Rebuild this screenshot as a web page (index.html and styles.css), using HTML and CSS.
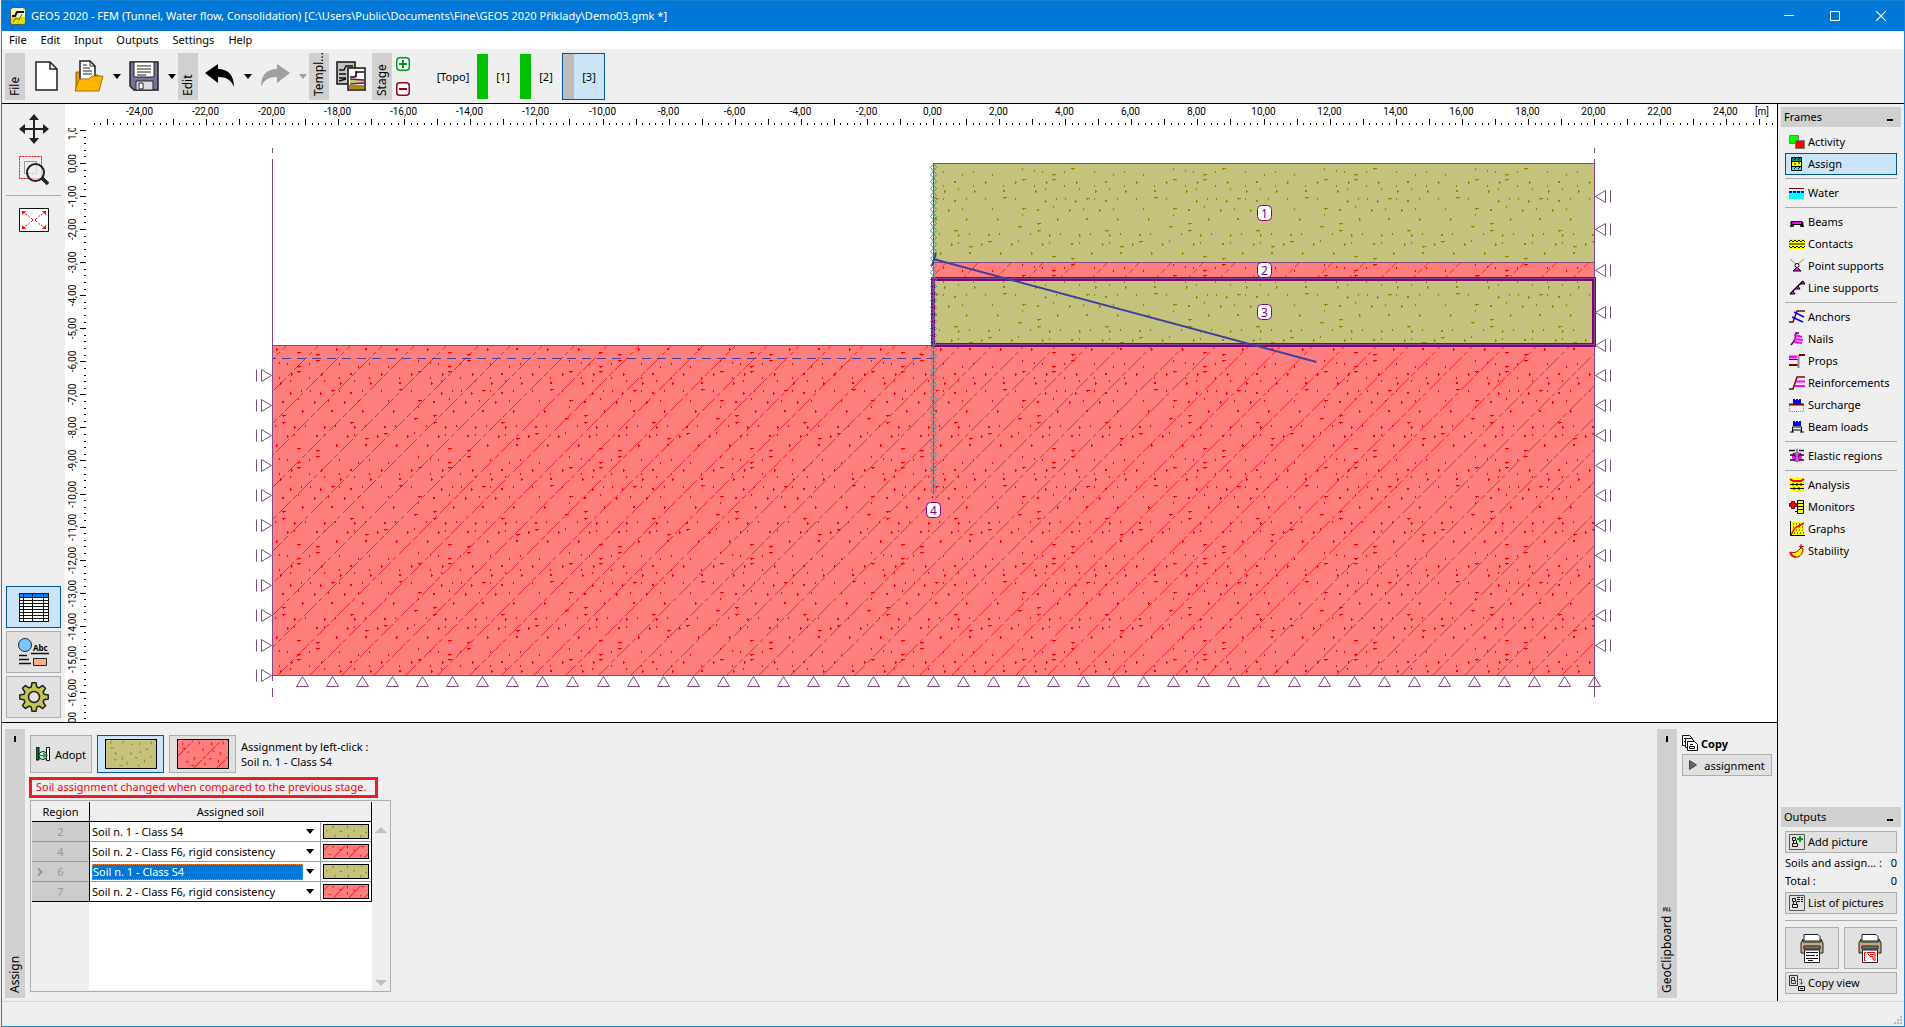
FILE: index.html
```html
<!DOCTYPE html>
<html lang="en">
<head>
<meta charset="utf-8">
<title>GEO5 2020 - FEM</title>
<link rel="stylesheet" href="styles.css">
</head>
<body>
<svg class="defs" aria-hidden="true">
  <defs>
    <pattern id="grains-red" width="151" height="96" patternUnits="userSpaceOnUse" patternTransform="translate(57 90)"><g class="grains red"></g></pattern>
    <pattern id="grains-olive" width="151" height="96" patternUnits="userSpaceOnUse" patternTransform="translate(57 90)"><g class="grains olive"></g></pattern>
    <pattern id="wall" x="0" y="60" width="7" height="7" patternUnits="userSpaceOnUse"><path d="M3.500 0L6.500 3.500L3.500 7L.5 3.500Z" fill="none" stroke="#4d8a8a"/></pattern>
  </defs>
  <symbol id="sw-olive" viewBox="0 0 52 30" preserveAspectRatio="xMidYMid slice"><rect width="52" height="30" fill="#c4c27c"/><path d="M5 2v3M18 1v3M35 3v3M47 2v3M5 9h3M10 13v3M26 5h2M26 13v3M36 12v2M41 10h3M8 21h3M17 18v3M22 23v3M30 19h3M40 21v3M46 18h2M14 27h3M34 26v2" stroke="#8c8c00" fill="none"/></symbol>
  <symbol id="sw-red" viewBox="0 0 52 30" preserveAspectRatio="xMidYMid slice"><rect width="52" height="30" fill="#ff7f7f"/><path d="M0 17L16 1M16 30L45 1M40 30L52 18" stroke="#f00" stroke-dasharray="12 2 4 2" fill="none"/><path d="M5 3v3M22 2v3M35 3v3M47 2v3M5 9h3M10 13h2M26 9v3M36 12h2M44 13v3M8 23h3M17 18v3M28 24v3M32 20h3M42 21v3M14 27h3" stroke="#f00" fill="none"/></symbol>
  <symbol id="sw-olive-row" viewBox="0 0 46 15" preserveAspectRatio="xMidYMid slice"><rect width="46" height="15" fill="#c4c27c"/><path d="M9.500 1v3M24.500 1v3M39.500 1v2M2 6.500h2M16 7.500h3M31.500 6v2M43 8.500h2M11.500 11v3M25.500 11v3M38.500 11v3" stroke="#8c8c00" fill="none"/></symbol>
  <symbol id="sw-red-row" viewBox="0 0 46 15" preserveAspectRatio="xMidYMid slice"><rect width="46" height="15" fill="#ff7f7f"/><path d="M0 6L5 1M10 14L22 2M26 14L38 2M42 14l4-4" stroke="#f00" fill="none"/><path d="M9.500 1v3M24.500 1v3M39 2.500h3M16 5.500h2M31.500 5v2M5 10.500h2M24.500 8v3M38.500 11v2" stroke="#f00" fill="none"/></symbol>
</svg>

<div class="window">
<header class="titlebar">
  <svg class="logo" width="16" height="18" viewBox="0 0 16 18"><rect x=".5" y=".5" width="15" height="17" rx="3" fill="#f4f4c0" stroke="#555"/><path d="M1 10h14v5q0 2-2 2H3q-2 0-2-2z" fill="#dbe000"/><path d="M2 9h3l2-4h7" stroke="#111" stroke-width="2" fill="none"/><path d="M3 15l3-4 3 2 3-6" stroke="#666600" fill="none"/></svg>
  <h1>GEO5 2020 - FEM (Tunnel, Water flow, Consolidation) [C:\Users\Public\Documents\Fine\GEO5 2020 Příklady\Demo03.gmk *]</h1>
  <button class="wbtn" aria-label="Minimize"><svg width="10" height="10"><path d="M0 4.500h10" stroke="#fff"/></svg></button>
  <button class="wbtn" aria-label="Maximize"><svg width="10" height="10"><path d="M.5.5h9v9h-9z" stroke="#fff" fill="none"/></svg></button>
  <button class="wbtn" aria-label="Close"><svg width="10" height="10"><path d="M0 0l10 10M10 0L0 10" stroke="#fff" stroke-width="1.200"/></svg></button>
</header>
<nav class="menubar"><a href="#">File</a><a href="#">Edit</a><a href="#">Input</a><a href="#">Outputs</a><a href="#">Settings</a><a href="#">Help</a></nav>

<div class="toolbar">
  <span class="vtab">File</span>
  <button class="tool" aria-label="New"><svg width="24" height="30" viewBox="0 0 24 30"><path d="M1 1h14l7 7v21H1z" fill="#fff" stroke="#222" stroke-width="1.500"/><path d="M15 1v7h7" fill="none" stroke="#222" stroke-width="1.500"/></svg></button>
  <button class="tool" aria-label="Open"><svg width="30" height="32" viewBox="0 0 30 32"><path d="M2 12h5l2 3h15v15H2z" fill="#e8a000" stroke="#8a5a00"/><path d="M6 1h10l5 5v15H6z" fill="#fff" stroke="#222" stroke-width="1.500"/><path d="M16 1v5h5" fill="none" stroke="#222"/><path d="M9 5h4M9 8h7M9 11h9M9 14h9" stroke="#222"/><path d="M5 19h10l3-3h11l-4 15H1z" fill="#ffb400" stroke="#a87000"/></svg></button>
  <button class="drop" aria-label="Open recent"><svg width="8" height="5"><path d="M0 0h8L4 5z"/></svg></button>
  <button class="tool" aria-label="Save"><svg width="30" height="30" viewBox="0 0 30 30"><path d="M1 1h28v28H5l-4-4z" fill="#75749c" stroke="#222" stroke-width="1.500"/><path d="M5 1h20v15H5z" fill="#fff" stroke="#222"/><path d="M8 5h14M8 8h14M8 11h14M8 14h9" stroke="#222"/><path d="M7 20h17v9H7z" fill="#ddd" stroke="#222"/><path d="M10 22h4v6h-4z" fill="#fff" stroke="#222"/></svg></button>
  <button class="drop" aria-label="Save as"><svg width="8" height="5"><path d="M0 0h8L4 5z"/></svg></button>
  <span class="vtab">Edit</span>
  <button class="tool" aria-label="Undo"><svg width="30" height="24" viewBox="0 0 30 24"><path d="M0 9L13 0v5c10 0 16 6 16 18-3-7-7-10-16-10v6z"/></svg></button>
  <button class="drop" aria-label="Undo list"><svg width="8" height="5"><path d="M0 0h8L4 5z"/></svg></button>
  <button class="tool" aria-label="Redo" disabled><svg width="30" height="24" viewBox="0 0 30 24"><path fill="#9f9f9f" d="M30 9L17 0v5C7 5 1 11 1 23c3-7 7-10 16-10v6z"/></svg></button>
  <button class="drop" aria-label="Redo list" disabled><svg width="8" height="5"><path fill="#9f9f9f" d="M0 0h8L4 5z"/></svg></button>
  <span class="vtab">Templ...</span>
  <button class="tool" aria-label="Templates"><svg width="30" height="30" viewBox="0 0 30 30"><path d="M1 1h18v22H1z" fill="#c3c3c3" stroke="#111" stroke-width="1.500"/><path d="M3 9h5l2-4h7M3 13h7M3 17h7M3 20l7-2" stroke="#111" stroke-width="1.500" fill="none"/><path d="M12 7h17v22H12z" fill="#fff" stroke="#111" stroke-width="1.500"/><path d="M13 24h15v4H13z" fill="#b08a10"/><path d="M14 16h5l2-5h7M20 10v6" stroke="#111" stroke-width="1.500" fill="none"/><path d="M14 20.500h14" stroke="#c8cc66" stroke-width="3"/><path d="M14 18l14 1M14 23l14-1" stroke="#800080" stroke-width="1.500"/></svg></button>
  <span class="vtab">Stage</span>
  <div class="stage-edit">
    <button aria-label="Add stage"><svg width="14" height="14" viewBox="0 0 14 14"><rect x=".75" y=".75" width="12.500" height="12.500" rx="3" fill="#fff" stroke="#009a22" stroke-width="1.500"/><path d="M3 7h8M7 3v8" stroke="#009a22" stroke-width="2"/></svg></button>
    <button aria-label="Remove stage"><svg width="14" height="14" viewBox="0 0 14 14"><rect x=".75" y=".75" width="12.500" height="12.500" rx="3" fill="#fff" stroke="#98001a" stroke-width="1.500"/><path d="M3 7h8" stroke="#98001a" stroke-width="2"/></svg></button>
  </div>
  <div class="stages">
    <button class="topo">[Topo]</button>
    <button><i></i><span>[1]</span></button>
    <button><i></i><span>[2]</span></button>
    <button class="on"><i></i><span>[3]</span></button>
  </div>
</div>

<div class="main">
<div class="left">
  <div class="work">
    <div class="side">
      <button class="tool" aria-label="Pan"><svg width="30" height="30" viewBox="0 0 30 30"><path d="M15 3v24M3 15h24" stroke="#222" stroke-width="2"/><path d="M15 0l5 6H10zM15 30l5-6H10zM0 15l6-5v10zM30 15l-6-5v10z" fill="#222"/></svg></button>
      <button class="tool" aria-label="Zoom region"><svg width="30" height="30" viewBox="0 0 30 30"><path d="M.5.5h22v22H.5z" fill="none" stroke="#f00" stroke-dasharray="2 1"/><path d="M5.500 5.500h12v12h-12z" fill="none" stroke="#999"/><circle cx="16.500" cy="16.500" r="8.500" fill="#eee" fill-opacity=".7" stroke="#222" stroke-width="2"/><path d="M23 22l6 6" stroke="#222" stroke-width="3.500"/></svg></button>
      <hr>
      <button class="tool" aria-label="Fit to window"><svg width="30" height="24" viewBox="0 0 30 24"><path d="M.5.5h29v23H.5z" fill="#fff" stroke="#111"/><path d="M4 4l7 5M26 4l-7 5M4 20l7-5M26 20l-7-5" stroke="#f00" stroke-dasharray="2 1"/><path d="M3 3h4L3 7zM27 3h-4l4 4zM3 21h4l-4-4zM27 21h-4l4-4z" fill="#f00"/><path d="M12 10l2 2-2 2M18 10l-2 2 2 2" stroke="#f00" fill="none"/></svg></button>
      <div class="spring"></div>
      <button class="box on" aria-label="Table"><svg width="30" height="29" viewBox="0 0 30 29" shape-rendering="crispEdges"><path d="M.5.5h29v28H.5z" fill="#fff"/><path d="M1 1h28v3H1z" fill="#0080ff"/><path d="M.5.5h29v28H.5zM0 4.500h30M0 7.500h30M0 10.500h30M0 13.500h30M0 16.500h30M0 19.500h30M0 22.500h30M0 25.500h30M4.500 0v29M13.500 0v29M24.500 0v29" stroke="#111" fill="none"/></svg></button>
      <button class="box" aria-label="Drawing settings"><svg width="31" height="29" viewBox="0 0 31 29"><circle cx="7" cy="7" r="6.500" fill="#7ac4ff" stroke="#222"/><text x="15" y="13" font-size="8" font-weight="bold">Abc</text><path d="M13 15.500h18M1 17.500h8M1 21.500h10M1 25.500h12" stroke="#111" stroke-width="1.500"/><path d="M15.500 20.500h13v7h-13z" fill="#ffb080" stroke="#222"/></svg></button>
      <button class="box" aria-label="Settings"><svg width="30" height="30" viewBox="-15 -15 30 30"><path d="M-2.800-10L-2-14.300H2L2.800-10 5-9.100 8.700-11.500 11.500-8.700 9.100-5 10-2.800 14.300-2V2L10 2.800 9.100 5 11.500 8.700 8.700 11.500 5 9.100 2.800 10 2 14.300H-2L-2.800 10-5 9.100-8.700 11.500-11.500 8.700-9.100 5-10 2.800-14.300 2V-2L-10-2.800-9.100-5-11.500-8.700-8.700-11.500-5-9.100Z" fill="#c4c250" stroke="#222" stroke-width="1.500" stroke-linejoin="round"/><circle r="5.500" fill="#e1e1e1" stroke="#222" stroke-width="1.500"/></svg></button>
    </div>
    <svg class="canvas" id="canvas" viewBox="0 0 1712 618" role="img" aria-label="Soil model">
      <clipPath id="ruler-clip"><path d="M0 24h30v594H0z"/></clipPath>
      <clipPath id="low-clip"><path id="low-area"/></clipPath>
      <g shape-rendering="crispEdges">
        <path id="soil-low" fill="#ff7f7f"/>
        <path id="low-grains" fill="url(#grains-red)"/>
        <path id="strata" class="red" stroke-width=".7" stroke-dasharray="18 3 5 3" clip-path="url(#low-clip)"/>
        <path id="soil-up" fill="#c4c27c"/>
        <path id="up-grains" fill="url(#grains-olive)"/>
      </g>
      <g id="model"></g>
      <g id="rulers" shape-rendering="crispEdges"></g>
      <g id="labels"></g>
    </svg>
  </div>

  <div class="bottom">
    <div class="vtab tall"><b></b><span>Assign</span></div>
    <div class="assign">
      <div class="soils">
        <button class="box adopt"><svg width="14" height="14" viewBox="0 0 14 14"><path d="M0 0h3v13H0z" fill="#007a20" stroke="#111"/><path d="M10.500.5h3v13h-3z" fill="#fff" stroke="#111"/><circle cx="7" cy="8.500" r="4" fill="#fff" stroke="#111"/><path d="M4 8.500h5M7 6l3 2.500L7 11" stroke="#00a020" stroke-width="1.500" fill="none"/></svg>Adopt</button>
        <button class="box pick on" aria-label="Class S4"><svg><use href="#sw-olive"/></svg></button>
        <button class="box pick" aria-label="Class F6"><svg><use href="#sw-red"/></svg></button>
        <p>Assignment by left-click :<br>Soil n. 1 - Class S4</p>
      </div>
      <p class="warn">Soil assignment changed when compared to the previous stage.</p>
      <div class="frame">
        <div class="sheet">
        <table>
          <colgroup><col class="w1"><col class="w2"><col class="w3"></colgroup>
          <thead><tr><th class="c1">Region</th><th colspan="2">Assigned soil</th></tr></thead>
          <tbody>
            <tr><td class="c1">2</td><td><select aria-label="Soil in region 2"><option>Soil n. 1 - Class S4</option><option>Soil n. 2 - Class F6, rigid consistency</option></select></td><td class="sw"><svg><use href="#sw-olive-row"/></svg></td></tr>
            <tr><td class="c1">4</td><td><select aria-label="Soil in region 4"><option>Soil n. 2 - Class F6, rigid consistency</option><option>Soil n. 1 - Class S4</option></select></td><td class="sw"><svg><use href="#sw-red-row"/></svg></td></tr>
            <tr><td class="c1"><svg class="cur" width="6" height="8"><path d="M0 0h2l4 4-4 4H0l3-4z" fill="#999"/></svg>6</td><td class="active"><select aria-label="Soil in region 6"><option>Soil n. 1 - Class S4</option><option>Soil n. 2 - Class F6, rigid consistency</option></select></td><td class="sw"><svg><use href="#sw-olive-row"/></svg></td></tr>
            <tr><td class="c1">7</td><td><select aria-label="Soil in region 7"><option>Soil n. 2 - Class F6, rigid consistency</option><option>Soil n. 1 - Class S4</option></select></td><td class="sw"><svg><use href="#sw-red-row"/></svg></td></tr>
          </tbody>
        </table>
        </div>
        <div class="scroll"><svg width="12" height="6"><path d="M6 0l6 6H0z" fill="#bfbfbf"/></svg><svg width="12" height="6"><path d="M0 0h12L6 6z" fill="#bfbfbf"/></svg></div>
      </div>
    </div>
    <div class="vtab tall"><b></b><span>GeoClipboard™</span></div>
    <div class="clip">
      <h2><svg width="16" height="16" viewBox="0 0 16 16" fill="#fff" stroke="#111"><path d="M.5.500h7l3 3v7H.5zM2 3.500h5M2 6.500h2"/><path d="M3.500 3.500h6l3 3v6h-9z"/><path d="M5.500 6.500h7l3 3v6h-10zM8 9.500h3M7.500 11.500h5v2h-5z"/></svg>Copy</h2>
      <button class="box"><svg width="8" height="10"><path d="M.5.5L7.500 5 .5 9.500z" fill="#666" stroke="#444"/></svg>assignment</button>
    </div>
  </div>
</div>

<aside>
  <h2 class="head">Frames<b></b></h2>
  <nav class="frames">
    <a href="#"><svg><path d="M.5 1.500h9v8h-9z" fill="#0f0" stroke="#777"/><path d="M6.500 6.500h9v8h-9z" fill="#f00" stroke="#777"/></svg>Activity</a>
    <a href="#" class="on"><svg><path d="M3 2h10v12H3z" fill="#ff0"/><path d="M3 2h10v3H3z" fill="#088"/><path d="M3 11h10v3H3z" fill="#0ff"/><path d="M2.500 1.500h10v13h-10zM3 5.500h10M3 10.500h10M5 4l2-2M9 4l2-2M5 13l2-2M9 13l2-2M5 8h2M9 7h2" fill="none" stroke="#000"/></svg>Assign</a>
    <hr>
    <a href="#"><svg><path d="M0 6h15v8H0z" fill="#0ff"/><path d="M0 3.500h15" stroke="#800000"/><path d="M0 7h15" stroke="#00f" stroke-width="2" stroke-dasharray="3 1"/></svg>Water</a>
    <hr>
    <a href="#"><svg><path d="M2 7.500h11v3H2z" fill="#f0f" stroke="#000"/><path d="M1 12h4M11 12h4M2.500 8v5M13.500 8v5" stroke="#000" stroke-width="1.500"/></svg>Beams</a>
    <a href="#"><svg><path d="M0 3h16v10H0z" fill="#ff0"/><path d="M0 6l2-2 2 2 2-2 2 2 2-2 2 2 2-2 2 2M0 10l2 2 2-2 2 2 2-2 2 2 2-2 2 2 2-2" fill="none" stroke="#000"/><path d="M0 8h16" stroke="#000" stroke-width="1"/></svg>Contacts</a>
    <a href="#"><svg><path d="M1 1l7 6 7-6" stroke="#888" fill="none"/><path d="M8 9l4 4H4z" fill="#f0f" stroke="#000"/><circle cx="8" cy="7.500" r="2" fill="#fff" stroke="#000"/></svg>Point supports</a>
    <a href="#"><svg><path d="M1 14L14 1" stroke="#000" stroke-width="1.500"/><path d="M1 14h5l-2-3zM6 9h5L9 6zM11 4h5l-2-3z" fill="#f0f" stroke="#000"/></svg>Line supports</a>
    <hr>
    <a href="#"><svg><path d="M0 13h4l4-11h8" stroke="#800000" fill="none" stroke-width="1.500"/><path d="M5 3l10 5M3 8l11 5" stroke="#00f" stroke-width="1.500"/></svg>Anchors</a>
    <a href="#"><svg><path d="M2 14l4-5 1-7h3" stroke="#222" fill="none" stroke-width="1.500"/><path d="M5 4l8 2M5 8l9 1M5 11l8 1" stroke="#f0f" stroke-width="2"/></svg>Nails</a>
    <a href="#"><svg><path d="M0 12h9" stroke="#800000" stroke-width="2"/><path d="M0 6.500h9" stroke="#222"/><path d="M0 4h8" stroke="#f0f" stroke-width="3"/><path d="M9.500 2v13" stroke="#888" stroke-width="2"/><path d="M10 2h6" stroke="#800000" stroke-width="2"/></svg>Props</a>
    <a href="#"><svg><path d="M0 14h4l4-12h8" stroke="#800000" fill="none" stroke-width="1.500"/><path d="M7 6.500h9M6 11h10" stroke="#f0f" stroke-width="2"/></svg>Reinforcements</a>
    <a href="#"><svg><path d="M4 2h2v1h1V2h2v1h1V2h2v5H4z" fill="#00f"/><path d="M0 7.500h15" stroke="#800000" stroke-width="2"/><path d="M.5 9v5.500h14V9" stroke="#888" fill="none" stroke-dasharray="1 1"/></svg>Surcharge</a>
    <a href="#"><svg><path d="M4 2h2v1h1V2h2v1h1V2h2v5H4z" fill="#00f"/><path d="M3.500 8v5M12.500 8v5M3 8h10M3 11h10M1 13h4M11 13h4" stroke="#000"/></svg>Beam loads</a>
    <hr>
    <a href="#"><svg><circle cx="8" cy="9" r="5" fill="#f0f"/><path d="M0 2.500h6M10 2.500h5M1 7h5M10 7h5M1 12h5M10 12h5" stroke="#111" stroke-width="1.500"/><path d="M8 1v12" stroke="#888" stroke-width="2"/><path d="M4 5l3 4M12 5l-3 4" stroke="#111"/></svg>Elastic regions</a>
    <hr>
    <a href="#"><svg><path d="M1 1h14v14H1z" fill="#ff0"/><path d="M1 2l3 2h8l3-2" stroke="#f00" stroke-width="2" fill="none"/><path d="M1 7.500h14M1 11.500h14M4 6v3M8 6v3M12 6v3M5 10v3M10 10v3" stroke="#111"/></svg>Analysis</a>
    <a href="#"><svg><path d="M.5 4.500h2v-2h3v2h2v3h-2v2h-3v-2h-2z" fill="#f00" stroke="#800000"/><path d="M8.500 1.500h6v13h-6z" fill="#ff0" stroke="#000"/><path d="M9 4.500h6M9 7.500h6M9 10.500h6M6 12.500h3" stroke="#000"/></svg>Monitors</a>
    <a href="#"><svg><path d="M1 1h14v13H1z" fill="#ff0"/><path d="M4 3h11M4 6h11M4 9h11M5 12h10" stroke="#000" stroke-dasharray="1 2"/><path d="M1.500 0v14.500H16" stroke="#000" fill="none"/><path d="M2 14l4-7 9-5" stroke="#f00" stroke-width="1.500" fill="none"/></svg>Graphs</a>
    <a href="#"><svg><path d="M1 9c5 2 9-1 11-5l2 2c0 6-5 9-8 8-2 0-4-3-5-5z" fill="#ff0" stroke="#a00"/><path d="M1 9c1 3 3 5 6 5" stroke="#f00" stroke-width="2" fill="none"/><path d="M12 1v5M10 3.500h5" stroke="#a00"/></svg>Stability</a>
  </nav>
  <h2 class="head">Outputs<b></b></h2>
  <div class="outputs">
    <button class="box wide"><svg width="16" height="16"><path d="M.5.5h15v15H.5z" fill="#e1e1e1" stroke="#555"/><path d="M3.500 3.500h3v3h-3zM3.500 9.500h5v3h-5zM4.500 6.500v3h3v-3" fill="none" stroke="#111"/><path d="M8 5h6M11 2v6" stroke="#00a000" stroke-width="2"/></svg>Add picture</button>
    <dl><dt>Soils and assign... :</dt><dd>0</dd><dt>Total :</dt><dd>0</dd></dl>
    <button class="box wide"><svg width="16" height="16"><path d="M.5.5h15v15H.5z" fill="#e1e1e1" stroke="#555"/><path d="M3.500 3.500h3v3h-3zM3.500 9.500h5v3h-5zM4.500 6.500v3h3v-3M8 2.500h3M12 2.500h2M8 4.500h3M12 4.500h2M8 6.500h3M12 6.500h2" fill="none" stroke="#111"/></svg>List of pictures</button>
    <hr>
    <div class="prints">
      <button class="box" aria-label="Print text"><svg width="24" height="29" viewBox="0 0 24 29"><path d="M4 .5h14l2 2V7H4z" fill="#fff" stroke="#222"/><path d="M3 5l-2 4v10h22V9l-2-4v3H3z" fill="#c0a878" stroke="#222"/><path d="M4 12h16v3H4z" fill="#777" stroke="#222"/><path d="M4.500 16h15v12.500h-15z" fill="#fff" stroke="#222"/><path d="M6 18.500h12M6 21.500h9M16 21.500h2M6 24.500h12M8 26.500h5" stroke="#111"/></svg></button>
      <button class="box" aria-label="Print drawing"><svg width="24" height="29" viewBox="0 0 24 29"><path d="M4 .5h14l2 2V7H4z" fill="#fff" stroke="#222"/><path d="M3 5l-2 4v10h22V9l-2-4v3H3z" fill="#c0a878" stroke="#222"/><path d="M4 12h16v3H4z" fill="#777" stroke="#222"/><path d="M4.500 16h15v12.500h-15z" fill="#fff" stroke="#222"/><path d="M8 18.500H6.500v8H8M9 18.500h8v8l-2-1v-3h-3z M12 20.500h4" stroke="#f00" fill="none"/></svg></button>
    </div>
    <button class="box wide"><svg width="16" height="16"><path d="M.5.500h8v10h-8zM2.500 2.500h3v3h-3zM2.500 5.500h4v3h-4z" fill="none" stroke="#333"/><path d="M10 4.500h2.500V9M11 7.500l1.500 2 1.500-2" stroke="#00a000" fill="none"/><path d="M9.500 11.500h6v4h-6zM11 13.500h3" fill="none" stroke="#111"/></svg>Copy view</button>
  </div>
</aside>
</div>
<footer><svg width="8" height="8" fill="#bbb"><path d="M6 0h2v2H6zM3 3h2v2H3zM6 3h2v2H6zM0 6h2v2H0zM3 6h2v2H3zM6 6h2v2H6z"/></svg></footer>
</div>
<script src="model.js"></script>
</body>
</html>
```
FILE: styles.css
```css
* { box-sizing: border-box; }
body { margin: 0; height: 100vh; background: #efefef; color: #000; font: 11px/15px "Noto Sans", "Open Sans", sans-serif; }
button, select { font: inherit; color: inherit; padding: 0; margin: 0; border: 0; background: none; border-radius: 0; }
a { color: inherit; text-decoration: none; }
p, h1, h2, dl, dd { margin: 0; font-size: 11px; font-weight: normal; }
svg { display: block; flex: none; }
hr { border: 0; height: 1px; background: #aaa; margin: 3px 0; width: 100%; }
.defs { position: absolute; width: 0; height: 0; }

.window { display: flex; flex-direction: column; height: 100%; margin-left: 1px; border: 1px solid #1883d7; border-top: 0; }
.titlebar { display: flex; align-items: center; height: 31px; padding: 0 0 1px 8px; background: #0078d7; color: #fff; border-top: 1px solid #1883d7; }
.titlebar h1 { flex: 1; margin-left: 5px; }
.wbtn { width: 46px; height: 29px; display: grid; place-items: center; }
.menubar { display: flex; height: 18px; background: #fff; line-height: 18px; }
.menubar a { padding: 0 7px; }

.toolbar { display: flex; align-items: center; height: 55px; padding: 0 3px; border-bottom: 1px solid #000; }
.vtab { width: 20px; height: 47px; background: #d0d0d0; writing-mode: vertical-rl; transform: rotate(180deg); line-height: 20px; padding-top: 4px; font-size: 12px; }
.vtab + .tool { margin-left: 1px; }
.tool { display: grid; place-items: center; width: 42px; height: 40px; }
.drop { display: grid; place-items: center; width: 13px; height: 40px; }
.stage-edit { display: grid; gap: 11px; margin: 0 20px 0 4px; }
.stages { display: flex; height: 47px; align-items: stretch; }
.stages button { display: flex; align-items: center; width: 43px; border: 1px solid transparent; }
.stages i { width: 11px; align-self: stretch; background: #00c000; }
.stages span { flex: 1; text-align: center; }
.stages .topo { width: 46px; justify-content: center; }
.stages .on { background: #cce4f7; border-color: #00549a; }
.stages .on i { background: #bdbdbd; }

.main { flex: 1; display: flex; min-height: 0; }
.left { flex: 1; display: flex; flex-direction: column; min-width: 0; }
.work { flex: 1; display: flex; min-height: 0; }
.side { width: 63px; padding: 5px 4px 4px; display: flex; flex-direction: column; align-items: center; gap: 2px; }
.side hr { margin: 2px 0; }
.side .spring { flex: 1; }
.side .box { width: 55px; height: 42px; margin-top: 1px; }
.canvas { flex: 1; min-width: 0; min-height: 0; height: auto; background: #fff; }
.box { display: flex; align-items: center; justify-content: center; background: #e1e1e1; border: 1px solid #adadad; }
.box.on { background: #cce4f7; border-color: #00549a; }

.bottom { display: flex; height: 279px; border-top: 1px solid #000; padding: 6px 5px 3px 3px; }
.vtab.tall { display: flex; justify-content: space-between; flex-direction: row-reverse; height: auto; padding: 5px 0 7px; }
.vtab b { width: 2px; height: 6px; background: #000; align-self: center; }
.assign { flex: 1; padding: 6px 0 6px 5px; display: flex; flex-direction: column; align-items: flex-start; }
.soils { display: flex; gap: 5px; height: 38px; align-items: stretch; }
.adopt { width: 62px; gap: 5px; }
.pick { width: 67px; }
.pick svg { width: 52px; height: 30px; border: 1px solid #000; }
.soils p { align-self: center; padding-bottom: 1px; }
.warn { height: 21px; margin: 4px 0 2px -1px; padding: 0 4px; border: 3px solid #ed1c24; color: #f00; min-width: 349px; line-height: 14px; }
.frame { flex: 1; display: flex; width: 361px; border: 1px solid #adadad; padding: 1px; }
.sheet { width: 340px; background: linear-gradient(90deg, #efefef 57px, #fff 57px); }
table { border-collapse: separate; border-spacing: 0; table-layout: fixed; width: 340px; border-right: 1px solid #000; }
.w1 { width: 58px; }
.w2 { width: 230px; }
.w3 { width: 51px; }
th { height: 20px; font-weight: normal; padding: 0; background: #efefef; border-bottom: 1px solid #000; }
.c1 { border-right: 1px solid #000; }
td { height: 20px; padding: 0; background: #fff; border-bottom: 1px solid #999; }
td.c1 { background: #ccc; color: #999; text-align: center; position: relative; }
tr:last-child td { border-bottom-color: #000; }
.cur { position: absolute; left: 5px; top: 6px; }
td.sw { border-left: 1px solid #999; }
.sw svg { width: 46px; height: 15px; margin: 0 auto; border: 1px solid #000; }
select { display: block; appearance: none; width: 229px; height: 16px; padding: 0 2px; outline: 0; }
td:nth-child(2) { background: #fff url("data:image/svg+xml,%3Csvg xmlns='http://www.w3.org/2000/svg' width='8' height='5'%3E%3Cpath d='M0 0h8L4 5z'/%3E%3C/svg%3E") no-repeat right 6px center; }
.active select { width: 211px; margin-left: 2px; padding: 0; background: #0078d7; color: #fff; border: 1px dotted #ff8728; line-height: 13px; }
.scroll { flex: 1; display: flex; flex-direction: column; justify-content: space-between; align-items: center; padding: 25px 0 4px; }
.clip { width: 95px; padding: 6px 0 0 5px; }
.clip h2 { display: flex; gap: 3px; height: 16px; align-items: center; font-weight: bold; margin-bottom: 3px; }
.clip .box { width: 90px; height: 22px; gap: 7px; }

aside { width: 127px; display: flex; flex-direction: column; border-left: 1px solid #000; padding: 3px 3px 7px; }
.head { display: flex; justify-content: space-between; align-items: center; height: 20px; padding: 0 8px 1px 3px; background: #d0d0d0; }
.head b { width: 6px; height: 2px; background: #000; margin-top: 6px; }
.frames { flex: 1; padding: 4px 4px 0; min-height: 0; }
.frames a { display: flex; align-items: center; height: 22px; padding: 0 3px 1px; gap: 3px; border: 1px solid transparent; white-space: nowrap; }
.frames a.on { background: #cce4f7; border-color: #00549a; }
.frames svg { width: 16px; height: 16px; }
.outputs { padding: 4px 4px 0; display: flex; flex-direction: column; }
.wide { height: 22px; padding: 0 3px 1px; gap: 3px; justify-content: flex-start; white-space: nowrap; }
dl { display: grid; grid-template-columns: 1fr auto; line-height: 18px; padding: 1px 0 2px; }
.outputs hr { margin: 6px 0; }
.prints { display: grid; grid-template-columns: 1fr 1fr; gap: 5px; margin-bottom: 3px; }
.prints .box { height: 42px; }
footer { height: 25px; border-top: 1px solid #d7d7d7; display: flex; align-items: flex-end; justify-content: flex-end; padding: 2px; }

.canvas text { font: 10px Roboto, "Liberation Sans", sans-serif; text-anchor: middle; }
.canvas .tag text { font: 12px "Noto Sans", sans-serif; fill: #800080; }
.tick { stroke: #000; fill: none; }
.edge { stroke: #7f4a7f; fill: none; shape-rendering: crispEdges; }
.support { stroke: #7f4a7f; fill: none; }
.red { stroke: #f00; fill: none; }
.olive { stroke: #8c8c00; fill: none; }
```
FILE: model.js
```js
// Model metres to drawing units
const S = 33.05, X0 = 868.5, Y0 = 59.5;
const X = m => Math.floor(X0 + m * S) + 0.5;
const Y = m => Math.floor(Y0 - m * S) + 0.5;
const byId = id => document.getElementById(id);
const box = (x1, y1, x2, y2) => `M${X(x1)} ${Y(y1)}H${X(x2)}V${Y(y2)}H${X(x1)}Z`;

// Soil grains: circles, arrows, tees and dots of one hatch tile
const grains = {
  o: [[10,16],[59,25],[78,7],[44,50],[93,59],[112,41],[78,84],[127,93]],
  r: [[17,7],[47,7],[41,16],[71,16],[29,25],[89,25],[120,25],[21,41],[51,41],[81,41],[14,50],[74,50],[104,50],[134,50],[3,59],[63,59],[123,59],[18,84],[48,84],[108,84],[138,84],[7,93],[67,93],[97,93]],
  t: [[59,4],[127,3],[10,29],[10,36],[78,36],[25,62],[44,64],[44,70],[112,47],[25,76],[25,81],[146,81],[93,52],[146,14],[142,32]],
  i: [[28,4],[37,4],[66,4],[89,4],[108,4],[138,4],[25,12],[55,14],[85,14],[115,14],[145,20],[2,39],[32,39],[62,39],[92,39],[122,39],[21,48],[51,48],[81,48],[141,46],[6,72],[36,73],[14,73],[66,73],[96,73],[115,76],[85,76],[145,70],[17,90],[51,90],[81,90],[6,87],[36,87],[66,87],[96,87],[126,87]]
};
let g = "";
for (const [x, y] of grains.o) g += `M${x - 1} ${y}l1-1 1 1-1 1z`;
for (const [x, y] of grains.r) g += `M${x}.5 ${y - 1}v3M${x} ${y}.5h2`;
for (const [x, y] of grains.t) g += `M${x - 1} ${y}.5h4M${x}.5 ${y}v2`;
for (const [x, y] of grains.i) g += `M${x}.5 ${y}v2`;
document.querySelectorAll(".grains").forEach(e => e.innerHTML = `<path d="${g}"/>`);

const low = box(-20, -5.5, 20, -15.5) + box(0, -3, 20, -3.5);
const up = box(0, 0, 20, -3) + box(0, -3.5, 20, -5.5);
["soil-low", "low-area", "low-grains"].forEach(i => byId(i).setAttribute("d", low));
["soil-up", "up-grains"].forEach(i => byId(i).setAttribute("d", up));

// Slanted strata lines run from the bottom edge up to the right
let lines = "";
for (let k = -8; k < 60; k++) {
  const sum = Math.round(494.6 + k * 32.1);
  lines += `M${sum - 573.5} 573.5L${sum - 155.5} 155.5`;
}
byId("strata").setAttribute("d", lines);

// Region edges, selected region, wall, water table and anchor
let m = `<path class="edge" d="${box(0, 0, 20, -3)}M${X(-20)} ${Y(-5.5)}H${X(20)}M${X(-20)} ${Y(-15.5)}H${X(20)}M${X(-20)} 44v5M${X(-20)} 55V577M${X(-20)} 584v9M${X(20)} 44v5M${X(20)} 55V593"/>`;
m += `<path d="M${X(0) - 0.5} ${Y(-3.5) - 0.5}H${X(20) - 0.5}V${Y(-5.5) - 0.5}H${X(0) - 0.5}Z" fill="none" stroke="#800080" stroke-width="4" shape-rendering="crispEdges"/>`;
m += `<path class="edge" d="M${X(0)} ${Y(-3.5) - 1}H${X(20)}V${Y(-5.5) - 1}H${X(0)}Z"/>`;
m += `<g transform="translate(${X(0) - 3.5} 0)"><rect y="60" width="7" height="330" fill="url(#wall)"/></g>`;
m += `<path d="M${X(0)} 60V390" stroke="#7f4a7f" stroke-opacity=".8" shape-rendering="crispEdges"/>`;
m += `<path d="M${X(-20)} 254.500H${X(0)}" stroke="#4040a0" stroke-dasharray="9 6" stroke-dashoffset="6" shape-rendering="crispEdges"/>`;
m += `<path d="M870 155.500L1251.500 258M867 162l4-13" stroke="#4040a0" stroke-width="2" fill="none"/>`;

// Supports
let s = "";
const side = (x, y, d) => s += `M${x} ${y}l${-10 * d} -6v12zM${x - 15 * d} ${y - 6}v12`;
for (let k = 1; k <= 11; k++) side(X(-20) - 1, Y(-5.5 - k / 1.1), 1);
for (const y of [1, 2, 3.25, 4.5, 5.5]) side(X(20) + 1, Y(-y), -1);
for (let k = 1; k <= 10; k++) side(X(20) + 1, Y(-5.5 - k / 1.1), -1);
for (let k = 1; k <= 44; k++) s += `M${X(-20 + k / 1.1)} ${Y(-15.5) + 1}l-6 10h12z`;
m += `<path class="support" d="${s}"/>`;
byId("model").innerHTML = m;

// Rulers
let t = "", l = "";
for (let k = -127; k <= 127; k++) t += `M${X(k / 5)} ${k % 5 ? 19 : 15}V21`;
for (let k = -84; k <= 5; k++) t += `M${k % 5 ? 19 : 15} ${Y(k / 5)}H21`;
byId("rulers").innerHTML = `<path class="tick" d="${t}"/>`;
const num = v => v.toFixed(2).replace(".", ",");
for (let v = -24; v <= 24; v += 2) l += `<text x="${X(v) - 1}" y="11">${num(v)}</text>`;
l += `<text x="1697" y="11">[m]</text><g clip-path="url(#ruler-clip)">`;
for (let v = -17; v <= 1; v++) l += `<text transform="translate(11 ${Y(v)}) rotate(-90)">${num(v)}</text>`;
l += "</g>";
[[10, 109], [10, 166], [10, 208], [0, 406]].forEach(([x, y], i) => {
  l += `<g class="tag"><rect x="${X(x) - 7}" y="${y - 7.5}" width="14" height="15" rx="4" fill="#fff" stroke="#800080"/><text x="${X(x)}" y="${y + 5}">${i + 1}</text></g>`;
});
byId("labels").innerHTML = l;
```
